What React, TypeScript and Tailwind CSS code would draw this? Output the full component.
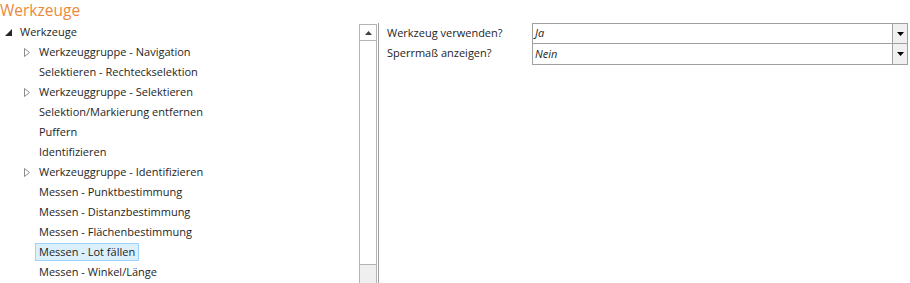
import React from "react";

type TreeItem = { label: string; group?: boolean; selected?: boolean };

const items: TreeItem[] = [
  { label: "Werkzeuggruppe - Navigation", group: true },
  { label: "Selektieren - Rechteckselektion" },
  { label: "Werkzeuggruppe - Selektieren", group: true },
  { label: "Selektion/Markierung entfernen" },
  { label: "Puffern" },
  { label: "Identifizieren" },
  { label: "Werkzeuggruppe - Identifizieren", group: true },
  { label: "Messen - Punktbestimmung" },
  { label: "Messen - Distanzbestimmung" },
  { label: "Messen - Flächenbestimmung" },
  { label: "Messen - Lot fällen", selected: true },
  { label: "Messen - Winkel/Länge" },
];

const settings = [
  { label: "Werkzeug verwenden?", value: "Ja" },
  { label: "Sperrmaß anzeigen?", value: "Nein" },
];

const font = { fontFamily: '"Open Sans", "Noto Sans", sans-serif' };

const Combo = ({ value, first }: { value: string; first?: boolean }) => (
  <div
    className={`flex h-[21px] border-x border-b border-[#a0a0a0] ${first ? "border-t" : ""}`}
  >
    <div className="flex-1 flex items-center pl-[2px] text-[11px] italic text-[#1e1e1e]">{value}</div>
    <div className="w-[15px] bg-[#f0f0f0] border-l border-[#a0a0a0] flex items-center justify-center">
      <svg width="7" height="4" viewBox="0 0 7 4">
        <path d="M0 0h7L3.5 4z" fill="#000" />
      </svg>
    </div>
  </div>
);

export default function App() {
  return (
    <div className="w-[910px] h-[283px] bg-white overflow-hidden" style={font}>
      <div className="h-[22px] text-[15.5px] leading-[21px] text-[#eb8a3c]">Werkzeuge</div>
      <div className="flex h-[261px]">
        {/* tree */}
        <div className="w-[359px] text-[11px] text-[#1e1e1e]">
          <div className="h-[20px] flex items-center">
            <svg className="ml-[5px] mr-[8px]" width="7" height="7" viewBox="0 0 7 7">
              <path d="M7 0V7H0z" fill="#262626" />
            </svg>
            <span>Werkzeuge</span>
          </div>
          {items.map((it) => (
            <div key={it.label} className="h-[20px] flex items-center">
              <div className="w-[36px] flex justify-end pr-[6px]">
                {it.group && (
                  <svg width="6" height="9" viewBox="0 0 6 9">
                    <path d="M0.5 0.5V8.5L5.5 4.5z" fill="none" stroke="#8c8c8c" strokeWidth="1" />
                  </svg>
                )}
              </div>
              <span
                className={
                  it.selected
                    ? "h-[18px] flex items-center px-[3px] -ml-[1px] bg-[#dcf0fc] border border-[#99d1ff]"
                    : "px-[3px]"
                }
              >
                {it.label}
              </span>
            </div>
          ))}
        </div>
        {/* scrollbar */}
        <div className="w-[18px] mt-[2px] flex flex-col border-l border-r border-t border-[#b4b4b4]">
          <div className="h-[16px] flex items-center justify-center border-b border-[#b4b4b4]">
            <svg width="7" height="4" viewBox="0 0 7 4">
              <path d="M0 4h7L3.5 0z" fill="#404040" />
            </svg>
          </div>
          <div className="h-[224px] border-b border-[#b4b4b4] bg-white" />
          <div className="flex-1 bg-[#efefef]" />
        </div>
        <div className="w-[1px] mt-[1px] ml-[1px] bg-[#a0a0a0]" />
        {/* settings */}
        <div className="flex-1 pt-[1px] flex">
          <div className="w-[153px] pl-[8px] text-[11px] text-[#1e1e1e]">
            {settings.map((s) => (
              <div key={s.label} className="h-[20px] flex items-center">
                {s.label}
              </div>
            ))}
          </div>
          <div className="w-[376px]">
            {settings.map((s, i) => (
              <Combo key={s.label} value={s.value} first={i === 0} />
            ))}
          </div>
        </div>
      </div>
    </div>
  );
}
